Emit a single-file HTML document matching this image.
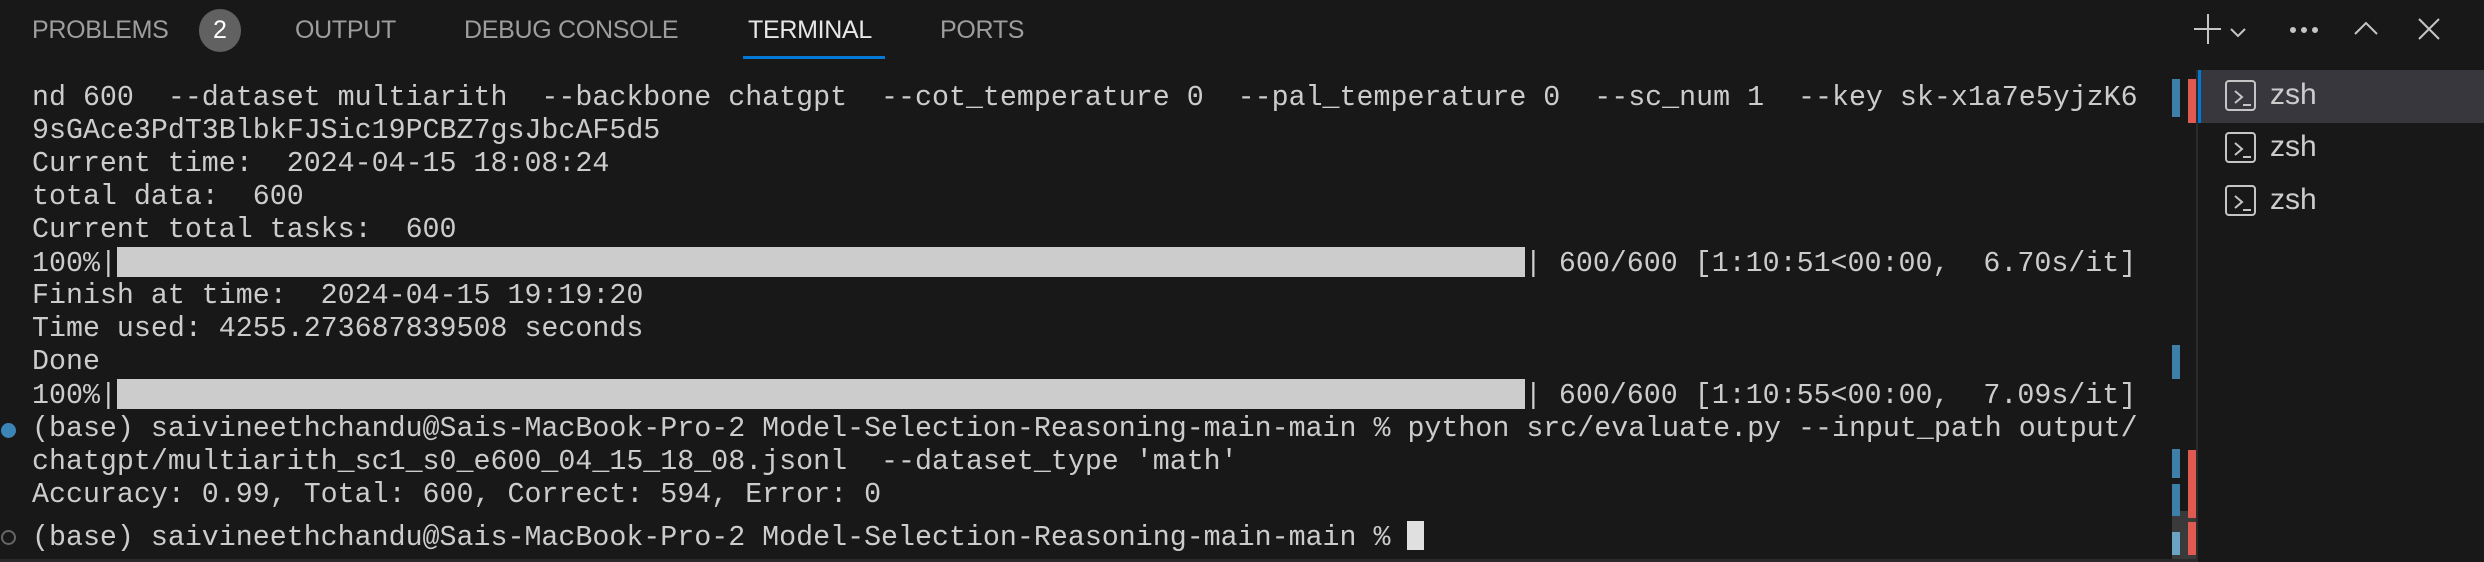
<!DOCTYPE html>
<html><head><style>
body{margin:0;width:2484px;height:562px;background:#181818;overflow:hidden;position:relative;font-family:"Liberation Sans",sans-serif}
.tab{position:absolute;top:16px;font-size:25px;color:#9d9d9d;letter-spacing:-0.3px}
.ln{position:absolute;left:32px;font-family:"Liberation Mono",monospace;font-size:28.3px;color:#cccccc;white-space:pre;line-height:33px}
.bar{display:inline-block;background:#cccccc;height:30px;vertical-align:-6px}
.m{position:absolute}
.row{position:absolute;left:2198px;width:286px;height:53px}
.row .ic{position:absolute;left:27px;top:10px;width:31px;height:31px;border:2px solid #c5c5c5;border-radius:4px;box-sizing:border-box}
.row .t{position:absolute;left:72px;top:8px;font-size:30px;color:#cccccc}
</style></head><body>
<div class="tab" style="left:32px">PROBLEMS</div>
<div style="position:absolute;left:199px;top:9px;width:42px;height:43px;border-radius:21px;background:#616161;color:#fff;font-size:25px;text-align:center;line-height:43px">2</div>
<div class="tab" style="left:295px">OUTPUT</div>
<div class="tab" style="left:464px">DEBUG CONSOLE</div>
<div class="tab" style="left:748px;color:#e7e7e7">TERMINAL</div>
<div style="position:absolute;left:743px;top:56px;width:142px;height:3px;background:#0078d4"></div>
<div class="tab" style="left:940px">PORTS</div>
<svg class="m" style="left:2190px;top:10px" width="290" height="40" fill="none" stroke="#c5c5c5" stroke-width="2">
<path d="M4 19H31M18 4V34"/><path d="M41 25l7 7 7-7" transform="translate(0,-6)"/>
<circle cx="103" cy="20" r="2" fill="#c5c5c5"/><circle cx="114" cy="20" r="2" fill="#c5c5c5"/><circle cx="125" cy="20" r="2" fill="#c5c5c5"/>
<path d="M165 24l11-11 11 11"/><path d="M229 9l20 20M249 9l-20 20"/>
</svg>
<div class="ln" style="top:82px">nd 600  --dataset multiarith  --backbone chatgpt  --cot_temperature 0  --pal_temperature 0  --sc_num 1  --key sk-x1a7e5yjzK6</div>
<div class="ln" style="top:115px">9sGAce3PdT3BlbkFJSic19PCBZ7gsJbcAF5d5</div>
<div class="ln" style="top:148px">Current time:  2024-04-15 18:08:24</div>
<div class="ln" style="top:181px">total data:  600</div>
<div class="ln" style="top:214px">Current total tasks:  600</div>
<div class="ln" style="top:247px">100%|<span class="bar" style="width:1408px"></span>| 600/600 [1:10:51&lt;00:00,  6.70s/it]</div>
<div class="ln" style="top:280px">Finish at time:  2024-04-15 19:19:20</div>
<div class="ln" style="top:313px">Time used: 4255.273687839508 seconds</div>
<div class="ln" style="top:346px">Done</div>
<div class="ln" style="top:379px">100%|<span class="bar" style="width:1408px"></span>| 600/600 [1:10:55&lt;00:00,  7.09s/it]</div>
<div class="ln" style="top:413px">(base) saivineethchandu@Sais-MacBook-Pro-2 Model-Selection-Reasoning-main-main % python src/evaluate.py --input_path output/</div>
<div class="ln" style="top:446px">chatgpt/multiarith_sc1_s0_e600_04_15_18_08.jsonl  --dataset_type 'math'</div>
<div class="ln" style="top:479px">Accuracy: 0.99, Total: 600, Correct: 594, Error: 0</div>
<div class="ln" style="top:521px">(base) saivineethchandu@Sais-MacBook-Pro-2 Model-Selection-Reasoning-main-main % <span style="display:inline-block;width:17px;height:29px;background:#e0e0e0;vertical-align:-5px"></span></div>
<div class="m" style="left:1px;top:423px;width:15px;height:15px;border-radius:8px;background:#3c84b5"></div>
<div class="m" style="left:1px;top:530px;width:11px;height:11px;border-radius:8px;border:2px solid #666"></div>
<div class="m" style="left:2172px;top:79px;width:8px;height:38px;background:#3d7fa8"></div>
<div class="m" style="left:2188px;top:79px;width:8px;height:44px;background:#e05a52"></div>
<div class="m" style="left:2172px;top:345px;width:8px;height:34px;background:#3d7fa8"></div>
<div class="m" style="left:2172px;top:511px;width:24px;height:48px;background:#3a3a3a"></div>
<div class="m" style="left:2172px;top:449px;width:8px;height:29px;background:#3d7fa8"></div>
<div class="m" style="left:2172px;top:484px;width:8px;height:32px;background:#3d7fa8"></div>
<div class="m" style="left:2172px;top:532px;width:8px;height:23px;background:#6aa3c4"></div>
<div class="m" style="left:2188px;top:450px;width:8px;height:68px;background:#e05a52"></div>
<div class="m" style="left:2188px;top:522px;width:8px;height:33px;background:#e05a52"></div>
<div class="m" style="left:2196px;top:70px;width:2px;height:492px;background:#2b2b2b"></div>
<div class="row" style="top:70px;background:#37373d;border-left:3px solid #0078d4;box-sizing:border-box"><div class="ic" style="left:24px"></div><svg class="m" style="left:32px;top:18px" width="20" height="20" fill="none" stroke="#c5c5c5" stroke-width="2"><path d="M2 3l7 6-7 6M10 17h8"/></svg><div class="t" style="left:69px">zsh</div></div>
<div class="row" style="top:122px"><div class="ic"></div><svg class="m" style="left:35px;top:18px" width="20" height="20" fill="none" stroke="#c5c5c5" stroke-width="2"><path d="M2 3l7 6-7 6M10 17h8"/></svg><div class="t">zsh</div></div>
<div class="row" style="top:175px"><div class="ic"></div><svg class="m" style="left:35px;top:18px" width="20" height="20" fill="none" stroke="#c5c5c5" stroke-width="2"><path d="M2 3l7 6-7 6M10 17h8"/></svg><div class="t">zsh</div></div>
<div class="m" style="left:0;top:559px;width:2196px;height:3px;background:#2a2a2a"></div>
</body></html>
